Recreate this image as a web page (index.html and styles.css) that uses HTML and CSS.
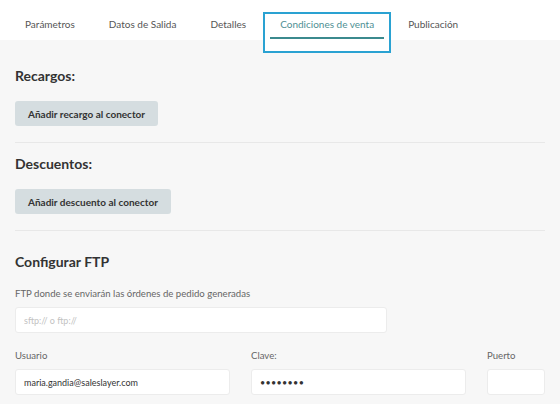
FILE: index.html
```html
<!DOCTYPE html>
<html lang="es">
<head>
    <meta charset="UTF-8">
    <meta name="viewport" content="width=device-width, initial-scale=1.0">
    <title>Condiciones de venta</title>
    <link rel="stylesheet" href="styles.css">
</head>
<body>
    <nav class="tabs">
        <a class="tab"><span>Parámetros</span></a>
        <a class="tab"><span>Datos de Salida</span></a>
        <a class="tab"><span>Detalles</span></a>
        <a class="tab active"><span>Condiciones de venta</span></a>
        <a class="tab"><span>Publicación</span></a>
    </nav>

    <main class="content">
        <section class="block">
            <h3>Recargos:</h3>
            <button class="btn">Añadir recargo al conector</button>
        </section>

        <section class="block">
            <h3>Descuentos:</h3>
            <button class="btn">Añadir descuento al conector</button>
        </section>

        <section class="block ftp">
            <h3>Configurar FTP</h3>
            <div class="field">
                <label>FTP donde se enviarán las órdenes de pedido generadas</label>
                <input type="text" class="wide" placeholder="sftp:// o ftp://">
            </div>
            <div class="row">
                <div class="field user">
                    <label>Usuario</label>
                    <input type="text" value="maria.gandia@saleslayer.com">
                </div>
                <div class="field pass">
                    <label>Clave:</label>
                    <input type="password" value="abcdefgh">
                </div>
                <div class="field port">
                    <label>Puerto</label>
                    <input type="text">
                </div>
            </div>
        </section>
    </main>
</body>
</html>
```

FILE: styles.css
```css
* {
    box-sizing: border-box;
}
body {
    margin: 0;
    font-family: 'Lato', sans-serif;
    background-color: #f7f7f7;
    color: #333;
    overflow: hidden;
}
.tabs {
    display: flex;
    align-items: flex-start;
    height: 40px;
    padding: 12px 0 0 8px;
    background-color: #ffffff;
}
.tab {
    display: block;
    border: 2px solid transparent;
    padding: 0 5px 12px;
    font-size: 10px;
    color: #555;
    cursor: pointer;
}
.tab span {
    display: block;
    padding: 3px 10px 6px;
    line-height: 14px;
    border-bottom: 2px solid transparent;
}
.tab.active {
    border-color: #2aa2d2;
    background-color: #ffffff;
    position: relative;
}
.tab.active span {
    color: #4e8f93;
    border-bottom-color: #3b8a8e;
}
.content {
    padding: 26px 15px 0;
}
.block {
    padding-bottom: 16px;
    border-bottom: 1px solid #e8e8e8;
    margin-bottom: 11px;
}
h3 {
    margin: 0;
    font-size: 14px;
    line-height: 20px;
    font-weight: 700;
    color: #333;
}
.btn {
    display: block;
    margin-top: 15px;
    height: 25px;
    padding: 0 13px;
    border: none;
    border-radius: 3px;
    background-color: #d5dde0;
    color: #333;
    font-family: 'Lato', sans-serif;
    font-size: 10px;
    font-weight: 700;
    cursor: pointer;
}
.ftp {
    border-bottom: none;
    margin-top: 21px;
}
.ftp h3 {
    margin-bottom: 15px;
}
.field label {
    display: block;
    font-size: 9.6px;
    line-height: 14px;
    color: #666;
    margin-bottom: 6px;
}
.field input {
    display: block;
    height: 26px;
    padding: 0 8px;
    border: 1px solid #ececec;
    border-radius: 3px;
    background-color: #ffffff;
    font-family: 'Lato', sans-serif;
    font-size: 9px;
    color: #333;
    outline: none;
}
.field input::placeholder {
    color: #c2c2c2;
    font-size: 9px;
}
.wide {
    width: 372px;
}
.row {
    display: flex;
    gap: 21px;
    margin-top: 16px;
}
.user input,
.pass input {
    width: 215px;
}
.pass input {
    font-size: 9px;
    letter-spacing: 0.3px;
}
.port input {
    width: 58px;
}
```
